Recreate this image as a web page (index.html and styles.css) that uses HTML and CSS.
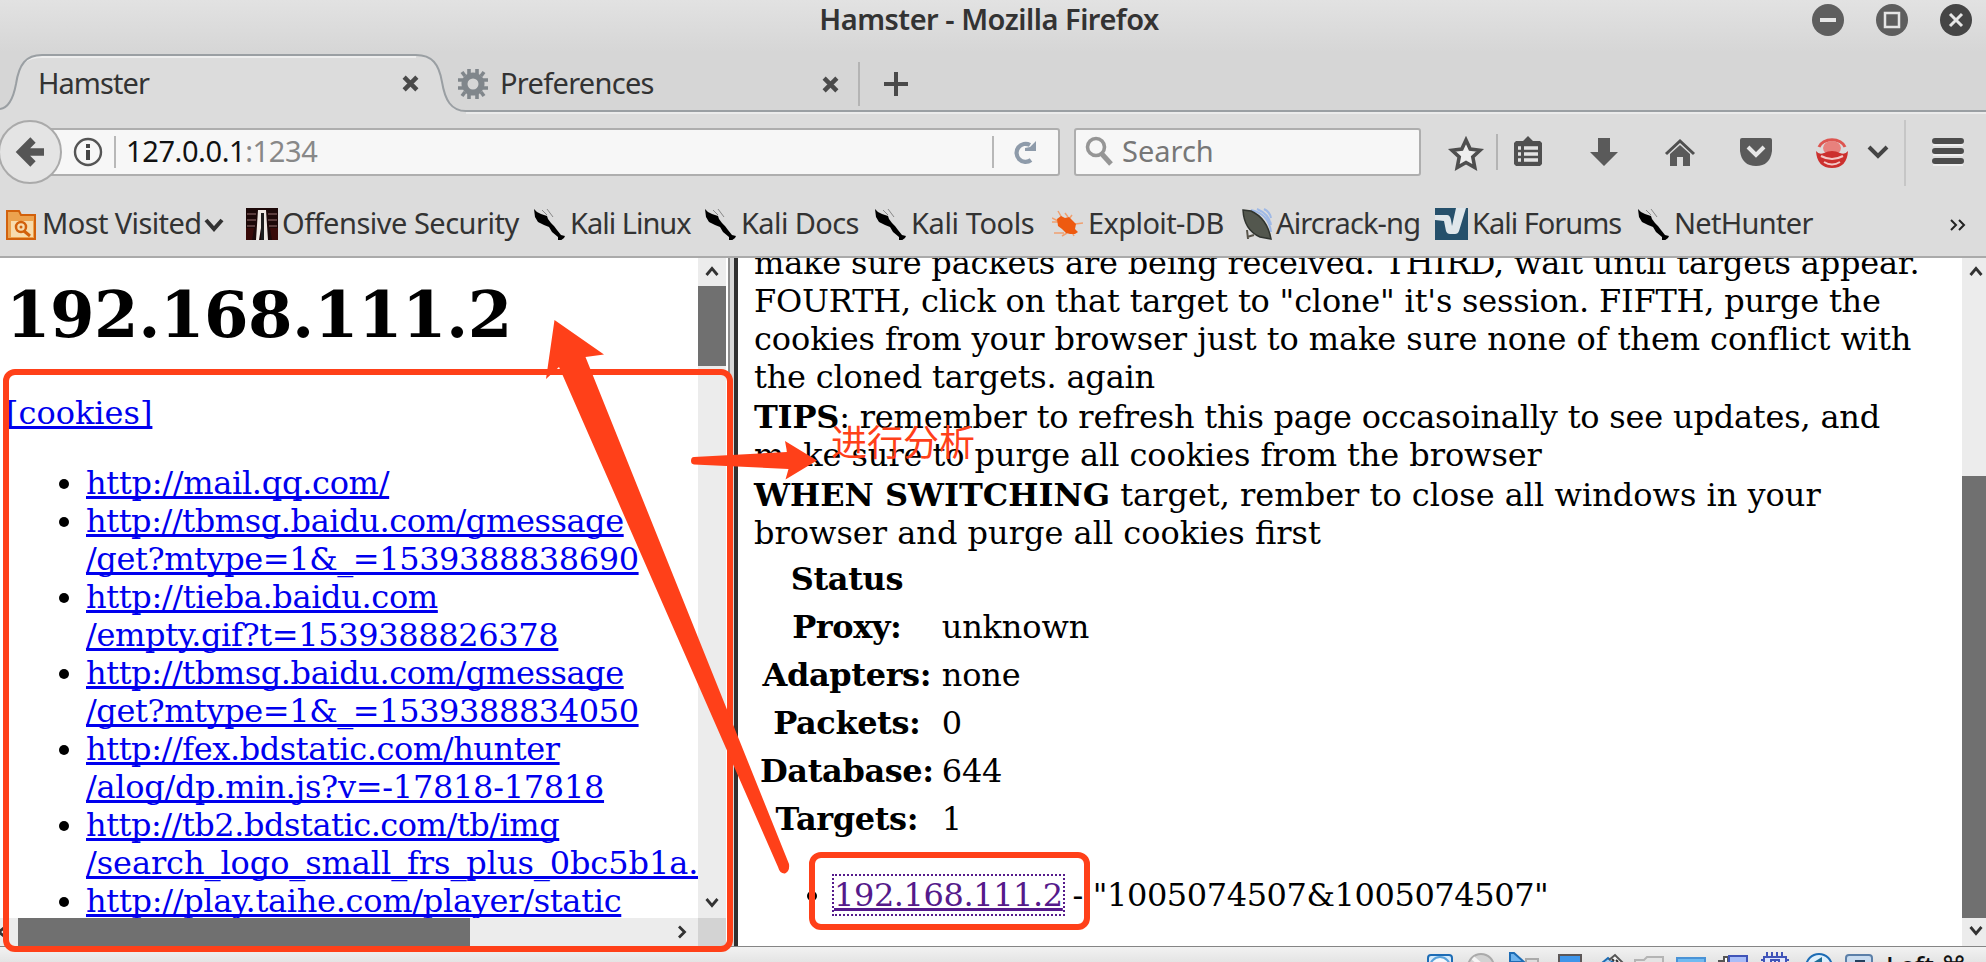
FILE: index.html
```html
<!DOCTYPE html>
<html lang="en">
<head>
<meta charset="utf-8">
<title>Hamster - Mozilla Firefox</title>
<link rel="stylesheet" href="styles.css">
</head>
<body>
<svg class="defs" width="0" height="0">
  <symbol id="kali" viewBox="0 0 32 32"><path fill="#000" d="M0 1l3 3 4 2 3 1 3 1 1 3 3 4 3 3 3 4 4 5 4 1-1 2-4 3-2-1 0-3-6-5-3-5-5-2-6-3-3-5z"/><path d="M8 2l5 5M13 1l6 8" stroke="#888" stroke-width="1" fill="none"/></symbol>
  <symbol id="close" viewBox="0 0 16 16"><path d="M2 2l12 12M14 2L2 14" stroke="#4a4a4a" stroke-width="4.2"/></symbol>
  <symbol id="up" viewBox="0 0 14 10"><path d="M1.5 9L7 2.5 12.500 9" stroke="#333" stroke-width="2.8" fill="none"/></symbol>
</svg>
<div class="screen">
  <header class="titlebar">
    <h2 class="wintitle">Hamster - Mozilla Firefox</h2>
    <div class="winbtns">
      <svg width="32" height="32"><circle cx="16" cy="16" r="16" fill="#5e5e5e"/><path d="M8 16h16" stroke="#e6e6e6" stroke-width="4"/></svg>
      <svg width="32" height="32"><circle cx="16" cy="16" r="16" fill="#5e5e5e"/><path d="M9 9h14v14H9z" stroke="#e6e6e6" stroke-width="2.500" fill="none"/></svg>
      <svg width="32" height="32"><circle cx="16" cy="16" r="16" fill="#454545"/><path d="M10 10l12 12M22 10L10 22" stroke="#e6e6e6" stroke-width="3"/></svg>
    </div>
  </header>
  <nav class="tabs">
    <svg class="tabshape" width="1986" height="62" viewBox="0 52 1986 62">
      <path d="M0 109C8 108 13 100 16 84C19 64 26 55 42 55H416C432 55 439 64 442 82C445 100 451 111 466 111V114H0z" fill="#dcdcdc"/>
      <path d="M466 113H1986" stroke="#ebebeb" stroke-width="2"/>
      <path d="M24 62Q30 57 42 57H416" stroke="#eee" stroke-width="2" fill="none"/>
      <path d="M0 109C8 108 13 100 16 84C19 64 26 55 42 55H416C432 55 439 64 442 82C445 100 451 111 466 111H1986" stroke="#9a9fa3" stroke-width="2" fill="none"/>
    </svg>
    <div class="tab first"><span>Hamster</span><svg width="17" height="17"><use href="#close"/></svg></div>
    <div class="tab second">
      <svg width="30" height="32" viewBox="-15 -16 30 32"><circle r="8.500" fill="none" stroke="#80868b" stroke-width="6"/><path d="M-4-10v-5M4-10v-5M-4 10v5M4 10v5M-10-4h-5M-10 4h-5M10-4h5M10 4h5M-8-8l-3-4M8-8l3-4M-8 8l-3 4M8 8l3 4" stroke="#80868b" stroke-width="3.600"/></svg>
      <span>Preferences</span><svg width="17" height="17"><use href="#close"/></svg></div>
    <svg class="plus" width="24" height="24"><path d="M12 0v24M0 12h24" stroke="#4a4a4a" stroke-width="4"/></svg>
  </nav>
  <div class="navbar">
    <svg class="back" width="64" height="66" viewBox="-2 119 64 66"><circle cx="30" cy="152" r="31" fill="#e4e4e4" stroke="#aaa" stroke-width="2"/><path d="M33 140L21 152L33 164M21 152H44" stroke="#555" stroke-width="7.500" fill="none"/></svg>
    <div class="urlbox">
      <svg class="info" width="30" height="30" viewBox="-15 -15 30 30"><circle r="13" fill="none" stroke="#555" stroke-width="2.400"/><path d="M0-8v4M0-2v10" stroke="#444" stroke-width="4"/></svg>
      <i class="bar"></i><span class="url">127.0.0.1<em>:1234</em></span><i class="bar"></i>
      <svg class="reload" width="26" height="26" viewBox="-13 -13 26 26"><path d="M6 8A9 9 0 1 1 5-7" fill="none" stroke="#8e9baa" stroke-width="4.200"/><path d="M0-1V-4L5-5 11-11V-1z" fill="#8e9baa"/></svg>
    </div>
    <div class="searchbox">
      <svg width="28" height="30"><circle cx="11" cy="11" r="8.500" fill="none" stroke="#969696" stroke-width="3.600"/><path d="M16 17l10 11" stroke="#969696" stroke-width="5"/></svg>
      <span>Search</span>
    </div>
    <svg class="tools" width="565" height="76" viewBox="1421 114 565 76">
      <path d="M1466 140l4.200 9 9.800 1.300-7.200 6.700 2 10.500-8.800-5-8.800 5 2-10.500-7.200-6.700 9.800-1.300z" fill="#eee" stroke="#4f4f4f" stroke-width="3.600"/>
      <path d="M1497 134v36" stroke="#b4b4b4" stroke-width="2"/>
      <path d="M1516 141h7l5-5 5 5h7l2 2v21l-2 2h-24l-2-2v-21z" fill="#505050"/><path d="M1518 148h3M1518 154h3M1518 160h3M1524 148h14M1524 154h14M1524 160h14" stroke="#e4e4e4" stroke-width="3.400"/>
      <path d="M1598 138h12v14h8l-14 14-14-14h8z" fill="#5a5a5a"/>
      <path d="M1666 154l14-13 14 13" fill="none" stroke="#505050" stroke-width="3"/><path d="M1670 154l10-9 10 9v12h-7v-9h-6v9h-7z" fill="#5a5a5a"/>
      <path d="M1742 138h28q2 0 2 2v11q-2 15-16 15t-16-15v-11q0-2 2-2z" fill="#5a5a5a"/><path d="M1748 147l8 8 8-8" fill="none" stroke="#e6e6e6" stroke-width="4"/>
      <path d="M1819 147a13.500 10 0 0 1 26 0" fill="none" stroke="#dd5550" stroke-width="3"/><ellipse cx="1832" cy="148" rx="9" ry="7" fill="#e8817d"/><path d="M1816 151q3 4 8 2 8-4 16 0 5 2 8-2-1 17-16 17t-16-17z" fill="#cc302e"/><path d="M1821 156q11 6 22 0M1824 162q8 5 16 0" stroke="#f3c9c7" stroke-width="2" fill="none"/>
      <path d="M1869 147l9 9 9-9" stroke="#444" stroke-width="4" fill="none"/>
      <path d="M1905 120v66" stroke="#c6c6c6" stroke-width="2"/>
      <path d="M1935 141h26M1935 151h26M1935 161h26" stroke="#4c4c4c" stroke-width="6" stroke-linecap="round"/><path d="M1933 145h30M1933 155h30M1933 165h30" stroke="#eee" stroke-width="2"/>
    </svg>
  </div>
  <div class="bookmarks">
    <div class="bm b1"><svg width="30" height="32"><path d="M1 3h12l2 4h14v24H1z" fill="#eca24e" stroke="#d2610c" stroke-width="2"/><path d="M5 13h22v16H5z" fill="#f7dcae"/><circle cx="15" cy="19" r="5" fill="none" stroke="#d2610c" stroke-width="2.500"/><circle cx="15" cy="19" r="1.500" fill="#d2610c"/><path d="M18 23l6 5" stroke="#d2610c" stroke-width="3"/></svg><span>Most Visited</span></div>
    <svg class="chev" width="20" height="14"><path d="M2 2l8 9 8-9" stroke="#333" stroke-width="4" fill="none"/></svg>
    <div class="bm b2"><svg width="32" height="32"><path d="M0 0h32v32H0z" fill="#1c0808"/><path d="M1 6h9M1 12h9M1 18h8M22 6h9M22 12h9M23 18h8" stroke="#5a3c3c" stroke-width="2"/><path d="M12 2h8l2 30h-4l-2-18-3 18h-3z" fill="#efe8e3"/><path d="M15 5h3v27h-3z" fill="#1e1e1e"/><path d="M0 20h8l-2 12H0zM24 20h8v12h-6z" fill="#380a08"/></svg><span>Offensive Security</span></div>
    <div class="bm b3"><svg width="32" height="32"><use href="#kali"/></svg><span>Kali Linux</span></div>
    <div class="bm b4"><svg width="32" height="32"><use href="#kali"/></svg><span>Kali Docs</span></div>
    <div class="bm b5"><svg width="32" height="32"><use href="#kali"/></svg><span>Kali Tools</span></div>
    <div class="bm b6"><svg width="32" height="32"><path d="M6 3l4 7M13 5l3 4M0 10l6 3M0 14h6M2 25h10M10 28l5-3M22 28l-2-4M20 7l-3 4M31 15l-8 1" stroke="#f0a070" stroke-width="1.500"/><path d="M5 11l4-3 4 2 4-1 4 4 3 3-1 5 3 3-3 2-5 0-4-1-4-4-4-3z" fill="#ee5a10"/></svg><span>Exploit-DB</span></div>
    <div class="bm b7"><svg width="30" height="32"><path d="M9 2Q27 6 29 24M15 1Q27 6 29 17M22 1Q28 4 29 10" fill="none" stroke="#9fb9e6" stroke-width="2"/><path d="M1 2L9 3Q25 10 29 31L18 29Q2 22 1 2z" fill="#53574e" stroke="#30342f" stroke-width="1.500"/><path d="M5 22l1 9M5 29l7-2" stroke="#58544a" stroke-width="2"/></svg><span>Aircrack-ng</span></div>
    <div class="bm b8"><svg width="33" height="32"><path d="M0 0h33v32H0z" fill="#25506b"/><path d="M0 7h12q3 0 4 5l1 6L21 0h10l-7 23q-1 3-4 3h-5q-3 0-4-3L9 13 0 12z" fill="#dfe6ea"/></svg><span>Kali Forums</span></div>
    <div class="bm b9"><svg width="32" height="32"><use href="#kali"/></svg><span>NetHunter</span></div>
    <svg class="more" width="16" height="12"><path d="M1 1l5 5-5 5M9 1l5 5-5 5" stroke="#222" stroke-width="2" fill="none"/></svg>
  </div>
  <main class="frames">
    <section class="left">
      <div class="page">
        <h1>192.168.111.2</h1>
        <p><a>[cookies]</a></p>
        <ul>
          <li><a class="t3">http://mail.qq.com/</a></li>
          <li><a class="t4">http://tbmsg.baidu.com/gmessage<br>/get?mtype=1&amp;_=1539388838690</a></li>
          <li><a class="t35">http://tieba.baidu.com<br>/empty.gif?t=1539388826378</a></li>
          <li><a class="t4">http://tbmsg.baidu.com/gmessage<br>/get?mtype=1&amp;_=1539388834050</a></li>
          <li><a class="t4">http://fex.bdstatic.com/hunter</a><br><a class="t3">/alog/dp.min.js?v=-17818-17818</a></li>
          <li><a class="t45">http://tb2.bdstatic.com/tb/img</a><br><a class="t1">/search_logo_small_frs_plus_0bc5b1a.</a></li>
          <li><a class="t3">http://play.taihe.com/player/static</a></li>
        </ul>
      </div>
      <div class="vscroll"><svg width="14" height="10"><use href="#up"/></svg><i></i><svg class="down" width="14" height="10"><use href="#up"/></svg></div>
      <div class="hscroll"><svg width="18" height="14"><path d="M5 2L-1 7 5 12" stroke="#333" stroke-width="2.800" fill="none"/></svg><i></i><svg width="10" height="14"><path d="M2 1.500L7.500 7 2 12.500" stroke="#333" stroke-width="2.800" fill="none"/></svg></div>
      <div class="corner"></div>
    </section>
    <div class="divider"></div>
    <section class="right">
      <div class="page">
        <p><span class="t2">make sure packets are being received. THIRD, wait until targets appear.<br>FOURTH, click on that target to "clone" it's session. FIFTH, purge the</span><br><span class="t1">cookies from your browser just to make sure none of them conflict with</span><br><span class="t2">the cloned targets. again</span></p>
        <p><span class="t2"><b>TIPS</b>: remember to refresh this page occasoinally to see updates, and</span><br><span class="t1">make sure to purge all cookies from the browser</span></p>
        <p><b>WHEN SWITCHING</b> target, rember to close all windows in your<br>browser and purge all cookies first</p>
        <table>
          <tr><th>Status</th><td></td></tr>
          <tr><th>Proxy:</th><td>unknown</td></tr>
          <tr><th>Adapters:</th><td>none</td></tr>
          <tr><th>Packets:</th><td>0</td></tr>
          <tr><th>Database:</th><td>644</td></tr>
          <tr><th>Targets:</th><td>1</td></tr>
        </table>
        <ul><li class="t4"><a class="visited">192.168.111.2</a> - "1005074507&amp;1005074507"</li></ul>
      </div>
      <div class="vscroll"><svg width="14" height="10"><use href="#up"/></svg><i></i><svg class="down" width="14" height="10"><use href="#up"/></svg></div>
    </section>
  </main>
  <footer class="status">
    <svg width="450" height="15" viewBox="1424 947 450 15">
      <rect x="1428" y="955" width="24" height="24" rx="3" fill="#d7ebfb" stroke="#1d6cb5" stroke-width="2"/><circle cx="1440" cy="967" r="10" fill="#f4f9fd" stroke="#5aa2da" stroke-width="2"/>
      <circle cx="1481" cy="967" r="13" fill="#d2d2d2" stroke="#aaa" stroke-width="2"/><path d="M1473 958l7 6" stroke="#f5f5f5" stroke-width="4"/>
      <path d="M1510 953l4 0 10 9h-14z" fill="#6db3ee" stroke="#1d6cb5" stroke-width="2"/><path d="M1526 959h12v5h-12z" fill="#ddd" stroke="#aaa" stroke-width="2"/>
      <rect x="1559" y="955" width="22" height="16" fill="#3f96ea" stroke="#5c5758" stroke-width="2"/>
      <path d="M1602 963l6-5 6 5" fill="#a9d2f4" stroke="#1d6cb5" stroke-width="2"/><path d="M1609 960l6-5 8 8" fill="#f4f4f4" stroke="#555" stroke-width="2"/><path d="M1612 959l2 2M1616 960l2 2" stroke="#333" stroke-width="2"/>
      <path d="M1635 963v-3h9l3-3h16v6" fill="#e4e4e4" stroke="#b4b4b4" stroke-width="2"/>
      <rect x="1677" y="958" width="28" height="12" fill="#70bbf2" stroke="#4a93d6" stroke-width="2"/>
      <path d="M1719 963v-2h5v-4h4v7" fill="#fff" stroke="#555" stroke-width="2"/><rect x="1729" y="956" width="18" height="14" fill="#a8bdf8" stroke="#4054b8" stroke-width="2"/>
      <path d="M1767 952v4M1772 952v4M1777 952v4M1782 952v4M1761 960h28" stroke="#4054b8" stroke-width="2"/><rect x="1764" y="957" width="22" height="12" fill="#dfe6fd" stroke="#4054b8" stroke-width="2"/><path d="M1771 962v-2h8v2M1775 960v2" fill="none" stroke="#4054b8" stroke-width="2"/>
      <circle cx="1819" cy="967" r="13" fill="#dff0fc" stroke="#1d6cb5" stroke-width="2"/><path d="M1814 962l8-5v5z" fill="#1d6c95"/>
      <rect x="1846" y="955" width="26" height="24" rx="3" fill="#c9dcf0" stroke="#5b7fa8" stroke-width="2"/><path d="M1855 960h10v3h-10z" fill="#23405e"/>
    </svg>
    <span>Left ⌘</span>
  </footer>
  <svg class="marks" width="1986" height="962">
    <g fill="none" stroke="#ff4019" stroke-width="6"><rect x="6" y="372" width="724" height="577" rx="9"/><rect x="812" y="855" width="275" height="72" rx="9"/></g>
    <g fill="#ff4019"><path d="M554.500 320L604 354.500 585.500 357 789 864Q790 871 785 873.500Q780 874 778 867L563 376 559 367 546 379z"/><path d="M694 457L787 452 785 441 817 460.500 785.500 479.500 788.500 469 694 464.500Q691 464 691 461Q691 457 694 457z"/></g>
  </svg>
  <div class="note">进行分析</div>
</div>
</body>
</html>
```
FILE: styles.css
```css
* { box-sizing: border-box; }
body { margin: 0; }
.defs { position: absolute; }
.screen { position: relative; width: 1986px; height: 962px; overflow: hidden; display: flex; flex-direction: column; background: #dcdcdc; font: 29px/40px "Noto Sans", sans-serif; color: #333; }
svg { display: block; flex: none; }
.titlebar { height: 52px; flex: none; display: grid; grid-template-columns: 1fr; background: linear-gradient(#e2e2e2, #d6d6d6); }
.wintitle { grid-area: 1/1; margin: -1px 8px 0 0; justify-self: center; font-size: 29px; font-weight: 600; line-height: 40px; letter-spacing: -.48px; white-space: nowrap; }
.winbtns { grid-area: 1/1; justify-self: end; display: flex; gap: 32px; padding: 4px 14px 0 0; }
.tabs { height: 62px; flex: none; position: relative; display: flex; background: #d6d6d6; }
.tabshape { position: absolute; left: 0; top: 0; }
.tab { position: relative; display: flex; align-items: center; height: 62px; letter-spacing: -.7px; }
.tab span { flex: 1; }
.first { width: 443px; padding: 0 24px 0 38px; letter-spacing: -.95px; }
.second { width: 417px; padding: 0 19px 0 15px; gap: 12px; border-right: 2px solid #b4b4b4; height: 44px; margin-top: 10px; }
.plus { position: relative; margin: 20px 0 0 24px; }
.second span { margin-top: -2px; }
.navbar { height: 76px; flex: none; display: flex; position: relative; }
.back { position: absolute; left: -2px; top: 5px; z-index: 1; }
.urlbox, .searchbox { height: 48px; margin-top: 14px; border: 2px solid #aeaeae; background: #f7f7f7; display: flex; align-items: center; border-radius: 3px; }
.urlbox { width: 1015px; margin-left: 45px; padding-left: 26px; }
.bar { width: 2px; height: 32px; background: #b8b8b8; }
.info { margin-right: 11px; }
.url { flex: 1; margin: -2px 0 0 10px; color: #111; letter-spacing: -.4px; }
.url em { font-style: normal; color: #888; }
.reload { margin: 0 20px 0 18px; }
.searchbox { width: 347px; margin-left: 14px; padding-left: 9px; color: #777; gap: 9px; }
.searchbox svg { margin-top: -2px; }
.searchbox span { margin-top: -2px; }
.bookmarks { height: 68px; flex: none; display: flex; align-items: flex-start; padding-top: 18px; border-bottom: 2px solid #aaa; }
.bm { display: flex; flex: none; white-space: nowrap; gap: 4px; line-height: 32px; letter-spacing: -.6px; }
.bm span { margin-top: -1px; }
.b1 { width: 198px; margin-left: 6px; gap: 6px; }
.chev { margin-top: 10px; width: 42px; }
.b2 { width: 288px; letter-spacing: -.5px; }
.b3 { width: 171px; letter-spacing: -1px; }
.b4 { width: 170px; }
.b5 { width: 177px; letter-spacing: -.4px; }
.b6 { width: 190px; }
.b7 { width: 193px; letter-spacing: -.85px; }
.b8 { width: 203px; letter-spacing: -1px; }
.b9 { width: 312px; letter-spacing: -.7px; }
.more { margin-top: 11px; }
.frames { height: 688px; flex: none; display: flex; font: 32px/38px "DejaVu Serif", serif; color: #000; background: #fff; }
.left { width: 728px; display: grid; grid-template: 660px 28px / 698px 28px 2px; }
.left .page { overflow: hidden; padding-left: 6px; white-space: nowrap; }
h1 { margin: 19px 0 41px; font-size: 64px; line-height: 76px; letter-spacing: -.48px; }
p { margin: 0; }
ul { margin: 32px 0 0; padding-left: 80px; }
a { color: #0000ee; text-decoration: underline; text-decoration-skip-ink: none; }
.t1 { letter-spacing: -.08px; }
.t2 { letter-spacing: -.2px; }
.t3 { letter-spacing: -.29px; }
.t35 { letter-spacing: -.35px; }
.t4 { letter-spacing: -.41px; }
.t45 { letter-spacing: -.46px; }
.vscroll { background: #ececec; display: flex; flex-direction: column; align-items: center; padding: 8px 0 10px; }
.vscroll i { width: 100%; height: 80px; margin-top: 10px; background: #707070; }
.down { margin-top: auto; transform: scaleY(-1); }
.hscroll { grid-row: 2; background: #ececec; display: flex; align-items: center; }
.hscroll i { width: 452px; height: 28px; background: #707070; margin-right: 207px; }
.corner { grid-row: 2; background: #d3d3d3; }
.divider { width: 10px; background: linear-gradient(90deg, #8c8c8c 2px, #d8d8d8 2px 6px, #303030 6px); }
.right { flex: 1; display: grid; grid-template-columns: 1224px 28px; overflow: hidden; }
.right .page { padding-left: 16px; overflow: hidden; white-space: nowrap; }
.right p { margin-bottom: 2px; }
.right p:first-child { margin-top: -14px; }
.right .vscroll i { height: 442px; margin-top: 200px; }
table { border-spacing: 4px; margin-top: -1px; }
th, td { padding: 2px; height: 44px; line-height: 38px; letter-spacing: -.15px; }
th { letter-spacing: -.4px; }
.right ul { margin-top: 31px; }
.visited { color: #551a8b; outline: 2px dotted #551a8b; }
.status { height: 16px; flex: none; border-top: 1px solid #858585; background: linear-gradient(#f2f2f2, #e4e4e4); display: flex; padding-left: 1424px; overflow: hidden; font: 500 26px/30px "Noto Sans", "DejaVu Sans", sans-serif; color: #111; }
.status span { margin: 3px 0 0 12px; white-space: nowrap; }
.marks { position: absolute; left: 0; top: 0; }
.note { position: absolute; left: 831px; top: 414px; font: 400 36px/52px "Noto Sans CJK SC", sans-serif; color: #ff4019; white-space: nowrap; }
```
